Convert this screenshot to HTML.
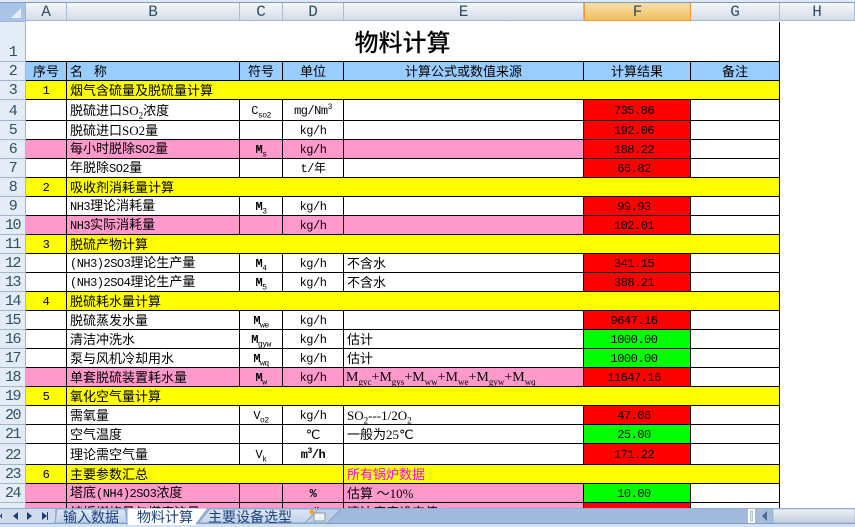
<!DOCTYPE html>
<html lang="zh"><head><meta charset="utf-8"><title>物料计算</title>
<style>
html,body{margin:0;padding:0;width:855px;height:527px;overflow:hidden;background:#fff}
body{position:relative;font-family:"Liberation Sans","WenQuanYi Zen Hei","Noto Sans CJK SC",sans-serif}
.ch{position:absolute;top:3px;height:18px;box-sizing:border-box;background:linear-gradient(#f5f7fa,#d5dce8);border-right:1px solid #a9bbd2;border-bottom:1px solid #a5b8d0;text-align:center;font:16px/19px "Liberation Mono",monospace;color:#2f5060}
.rh{position:absolute;left:0;width:26px;box-sizing:border-box;background:#e4ecf7;border-right:1px solid #9eb6ce;border-bottom:1px solid #9eb6ce;text-align:center;font:15px "Liberation Mono",monospace;letter-spacing:-1.5px;color:#2f5060;display:flex;align-items:flex-end;justify-content:center;line-height:16px}
#sheet{position:absolute;left:26px;top:22px;width:754px;height:486px;overflow:hidden}
table{border-collapse:separate;border-spacing:0;table-layout:fixed;width:754px}
td{box-sizing:border-box;border-right:1px solid #000;border-bottom:1px solid #000;padding:0 0 0 3px;font-size:13px;line-height:13px;white-space:nowrap;overflow:hidden;color:#000;text-align:left;vertical-align:middle}
.c{text-align:center;padding:0}
.m{font-family:"Liberation Mono",monospace;font-size:12px;letter-spacing:-.5px}
td.m{padding-top:2px}
.t{font-family:"Liberation Serif",serif}
.n{font-family:"Liberation Mono",monospace;font-size:12px;letter-spacing:-.5px;text-align:center;padding:2px 6px 0 0}
.y td{background:#ff0}.b td{background:#9cf}.p td{background:#f9c}
td.r{background:#f00}td.g{background:#0f0}
sub,sup{font-size:8px;line-height:0}
.t sub{font-size:9px}
tr{height:19px}
</style></head><body>
<div style="position:absolute;left:0;top:0;width:855px;height:2px;background:#dfe8f3"></div>
<div style="position:absolute;left:0;top:2px;width:855px;height:1px;background:#7a9cc6"></div>
<div style="position:absolute;left:0;top:3px;width:26px;height:19px;background:#a9c4e9;box-sizing:border-box;border-right:1px solid #9eb6ce;border-bottom:1px solid #9eb6ce"></div>
<svg style="position:absolute;left:0;top:3px" width="26" height="19"><polygon points="21,5 21,15 11,15" fill="#e6eef8"/></svg>
<div class="ch" style="left:26px;width:41px">A</div>
<div class="ch" style="left:67px;width:173px">B</div>
<div class="ch" style="left:240px;width:43px">C</div>
<div class="ch" style="left:283px;width:61px">D</div>
<div class="ch" style="left:344px;width:240px">E</div>
<div class="ch" style="left:584px;width:107px;background:linear-gradient(#f9dfa8,#f1c060);border:1px solid #f29536;border-top:0">F</div>
<div class="ch" style="left:691px;width:89px">G</div>
<div class="ch" style="left:780px;width:75px">H</div>

<div class="rh" style="top:22px;height:40px">1</div>
<div class="rh" style="top:62px;height:19px">2</div>
<div class="rh" style="top:81px;height:19px">3</div>
<div class="rh" style="top:100px;height:21px">4</div>
<div class="rh" style="top:121px;height:19px">5</div>
<div class="rh" style="top:140px;height:19px">6</div>
<div class="rh" style="top:159px;height:19px">7</div>
<div class="rh" style="top:178px;height:19px">8</div>
<div class="rh" style="top:197px;height:19px">9</div>
<div class="rh" style="top:216px;height:19px">10</div>
<div class="rh" style="top:235px;height:19px">11</div>
<div class="rh" style="top:254px;height:19px">12</div>
<div class="rh" style="top:273px;height:19px">13</div>
<div class="rh" style="top:292px;height:19px">14</div>
<div class="rh" style="top:311px;height:19px">15</div>
<div class="rh" style="top:330px;height:19px">16</div>
<div class="rh" style="top:349px;height:19px">17</div>
<div class="rh" style="top:368px;height:19px">18</div>
<div class="rh" style="top:387px;height:19px">19</div>
<div class="rh" style="top:406px;height:19px">20</div>
<div class="rh" style="top:425px;height:19px">21</div>
<div class="rh" style="top:444px;height:21px">22</div>
<div class="rh" style="top:465px;height:19px">23</div>
<div class="rh" style="top:484px;height:19px">24</div>
<div class="rh" style="top:503px;height:19px"></div>

<div id="sheet"><table>
<colgroup><col style="width:41px"><col style="width:173px"><col style="width:43px"><col style="width:61px"><col style="width:240px"><col style="width:107px"><col style="width:89px"></colgroup>
<tr style="height:40px"><td colspan="7" class="c" style="font-size:24px;line-height:28px;padding-top:4px;font-family:'Liberation Sans','Noto Sans CJK SC',sans-serif;font-weight:500">物料计算</td></tr>
<tr class="b"><td class="c">序号</td><td>名&nbsp;&nbsp;&nbsp;称</td><td class="c">符号</td><td class="c">单位</td><td class="c">计算公式或数值来源</td><td class="c">计算结果</td><td class="c">备注</td></tr>
<tr class="y"><td class="c m">1</td><td colspan="6">烟气含硫量及脱硫量计算</td></tr>
<tr style="height:21px"><td></td><td>脱硫进口<span class="t">SO<sub>2</sub></span>浓度</td><td class="c m">C<sub>so2</sub></td><td class="c m">mg/Nm<sup>3</sup></td><td></td><td class="n r">735.86</td><td></td></tr>
<tr><td></td><td>脱硫进口<span class="t">SO2</span>量</td><td></td><td class="c m">kg/h</td><td></td><td class="n r">192.06</td><td></td></tr>
<tr class="p"><td></td><td>每小时脱除<span class="m">SO2</span>量</td><td class="c m"><b>M</b><sub>s</sub></td><td class="c m">kg/h</td><td></td><td class="n r">188.22</td><td style="background:#fff"></td></tr>
<tr><td></td><td>年脱除<span class="m">SO2</span>量</td><td></td><td class="c m">t/年</td><td></td><td class="n r">66.82</td><td></td></tr>
<tr class="y"><td class="c m">2</td><td colspan="6">吸收剂消耗量计算</td></tr>
<tr><td></td><td><span class="m">NH3</span>理论消耗量</td><td class="c m"><b>M</b><sub>3</sub></td><td class="c m">kg/h</td><td></td><td class="n r">99.93</td><td></td></tr>
<tr class="p"><td></td><td><span class="m">NH3</span>实际消耗量</td><td></td><td class="c m">kg/h</td><td></td><td class="n r">102.01</td><td style="background:#fff"></td></tr>
<tr class="y"><td class="c m">3</td><td colspan="6">脱硫产物计算</td></tr>
<tr><td></td><td><span class="m">(NH3)2SO3</span>理论生产量</td><td class="c m"><b>M</b><sub>4</sub></td><td class="c m">kg/h</td><td>不含水</td><td class="n r">341.15</td><td></td></tr>
<tr><td></td><td><span class="m">(NH3)2SO4</span>理论生产量</td><td class="c m"><b>M</b><sub>5</sub></td><td class="c m">kg/h</td><td>不含水</td><td class="n r">388.21</td><td></td></tr>
<tr class="y"><td class="c m">4</td><td colspan="6">脱硫耗水量计算</td></tr>
<tr><td></td><td>脱硫蒸发水量</td><td class="c m"><b>M</b><sub>we</sub></td><td class="c m">kg/h</td><td></td><td class="n r">9647.16</td><td></td></tr>
<tr><td></td><td>清洁冲洗水</td><td class="c m"><b>M</b><sub>gyw</sub></td><td class="c m">kg/h</td><td>估计</td><td class="n g">1000.00</td><td></td></tr>
<tr><td></td><td>泵与风机冷却用水</td><td class="c m"><b>M</b><sub>wq</sub></td><td class="c m">kg/h</td><td>估计</td><td class="n g">1000.00</td><td></td></tr>
<tr class="p"><td></td><td>单套脱硫装置耗水量</td><td class="c m"><b>M</b><sub>w</sub></td><td class="c m">kg/h</td><td class="t" style="padding-left:2px;font-size:14px">M<sub>gyc</sub>+M<sub>gys</sub>+M<sub>ww</sub>+M<sub>we</sub>+M<sub>gyw</sub>+M<sub>wq</sub></td><td class="n r">11647.16</td><td style="background:#fff"></td></tr>
<tr class="y"><td class="c m">5</td><td colspan="6">氧化空气量计算</td></tr>
<tr><td></td><td>需氧量</td><td class="c m">V<sub>o2</sub></td><td class="c m">kg/h</td><td class="t">SO<sub>2</sub>---1/2O<sub>2</sub></td><td class="n r">47.06</td><td></td></tr>
<tr><td></td><td>空气温度</td><td></td><td class="c t">℃</td><td>一般为<span class="t">25℃</span></td><td class="n g">25.00</td><td></td></tr>
<tr style="height:21px"><td></td><td>理论需空气量</td><td class="c m">V<sub>k</sub></td><td class="c m"><b>m<sup>3</sup>/h</b></td><td></td><td class="n r">171.22</td><td></td></tr>
<tr class="y"><td class="c m">6</td><td colspan="3">主要参数汇总</td><td colspan="3" style="color:#f0f">所有锅炉数据</td></tr>
<tr class="p"><td></td><td>塔底<span class="m">(NH4)2SO3</span>浓度</td><td></td><td class="c m"><b>%</b></td><td>估算 ～<span class="t">10%</span></td><td class="n g">10.00</td><td style="background:#fff"></td></tr>
<tr class="p"><td></td><td>结垢燃烧量与塔底流量</td><td></td><td class="c m">t/h</td><td>清洁度度设定值</td><td class="n r"></td><td style="background:#fff"></td></tr>
</table></div>

<svg style="position:absolute;left:0;top:508px" width="855" height="19">
<defs>
<linearGradient id="tab" x1="0" y1="0" x2="0" y2="1"><stop offset="0" stop-color="#dfe9f5"/><stop offset="1" stop-color="#bfd1e8"/></linearGradient>
<linearGradient id="track" x1="0" y1="0" x2="0" y2="1"><stop offset="0" stop-color="#eef1f6"/><stop offset="1" stop-color="#c2ccdb"/></linearGradient>
</defs>
<rect width="855" height="19" fill="#d4e0ef"/>
<rect width="855" height="15" fill="#a0b9dc"/>
<rect y="0" width="855" height="1" fill="#8fb0d6"/>
<rect y="15" width="855" height="1" fill="#7f9fc9"/>
<rect x="0" y="1" width="55" height="14" fill="#cfdcee"/>
<polygon points="2,5 2,11 0,8" fill="#1b3f78"/>
<polygon points="18,4 18,12 13,8" fill="#1b3f78"/>
<polygon points="27,4 27,12 32,8" fill="#1b3f78"/>
<polygon points="42,4 42,12 47,8" fill="#1b3f78"/><rect x="47" y="4" width="1" height="8" fill="#1b3f78"/>
<polygon points="305,15 318,1 341,1 327,15" fill="#bcd0e8" stroke="#8aa6cc"/>
<polygon points="198,15 210,1 318,1 305,15" fill="url(#tab)" stroke="#8aa6cc"/>
<polygon points="55,15 57,1 125,1 127,15" fill="url(#tab)" stroke="#8aa6cc"/>
<polygon points="127,16 127,0 208,0 196,16" fill="#fff" stroke="#8aa6cc"/>
<rect x="128" y="15" width="68" height="2" fill="#fff"/>
<rect x="314" y="5" width="11" height="8" fill="#eef1f5" stroke="#8d97a5"/>
<circle cx="312" cy="4" r="2.5" fill="#f4a821"/>
<text x="63" y="14" font-size="14" fill="#1c3f7c" font-family="WenQuanYi Zen Hei,Noto Sans CJK SC,sans-serif">输入数据</text>
<text x="137" y="14" font-size="14" fill="#1c3f7c" font-family="WenQuanYi Zen Hei,Noto Sans CJK SC,sans-serif">物料计算</text>
<text x="208" y="14" font-size="14" fill="#1c3f7c" font-family="WenQuanYi Zen Hei,Noto Sans CJK SC,sans-serif">主要设备选型</text>
<rect x="748" y="1" width="7" height="14" fill="#fff"/>
<rect x="750.5" y="3" width="2" height="10" fill="#dfe7f1" stroke="#8fa8c8" stroke-width=".6"/>
<rect x="755" y="1" width="18" height="14" fill="#a7bcdb"/>
<polygon points="762,8 767,3 767,13" fill="#54688a"/>
<rect x="773" y="1" width="82" height="14" fill="url(#track)" stroke="#8ea6c6" stroke-width=".6"/>
</svg>
</body></html>
